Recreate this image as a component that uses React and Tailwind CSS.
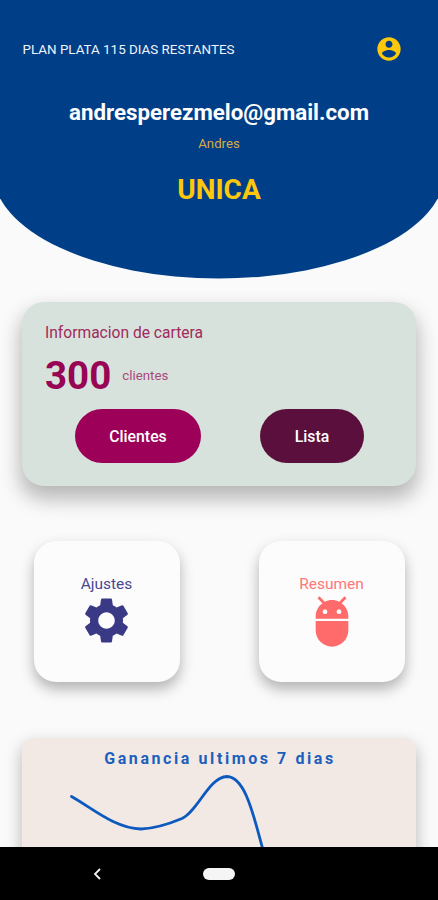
import React from "react";
import { MdSettings, MdAdb } from "react-icons/md";

const Header = () => (
  <header className="relative h-[279px] shrink-0 overflow-hidden">
    <svg
      className="absolute inset-0"
      width="438"
      height="279"
      viewBox="0 0 438 279"
      fill="#003f87"
    >
      <path d="M-7 0H445V172A226 106.500 0 0 1 -7 172Z" />
    </svg>
    <div className="relative">
      <div className="flex items-center justify-between pt-[35px] pl-[22.500px] pr-[35px]">
        <p className="h-[28px] text-[13.400px] leading-[29px] text-[#f0f4fb]">
          PLAN PLATA 115 DIAS RESTANTES
        </p>
        <svg width="28" height="28" viewBox="0 0 24 24" fill="#fdc70c">
          <path d="M12 2C6.480 2 2 6.480 2 12s4.480 10 10 10 10-4.480 10-10S17.520 2 12 2zm0 3c1.660 0 3 1.340 3 3s-1.340 3-3 3-3-1.340-3-3 1.340-3 3-3zm0 14.200c-2.500 0-4.710-1.280-6-3.220.030-1.990 4-3.080 6-3.080 1.990 0 5.970 1.090 6 3.080-1.290 1.940-3.500 3.220-6 3.220z" />
        </svg>
      </div>
      <div className="flex flex-col items-center">
        <h1 className="mt-[35px] text-[22.300px] leading-[28px] font-bold text-white">
          andresperezmelo@gmail.com
        </h1>
        <p className="mt-[8px] text-[13.200px] leading-[20px] text-[#d9ab45]">Andres</p>
        <h2 className="mt-[19px] text-[28px] leading-[34px] font-bold text-[#fdc70c]">UNICA</h2>
      </div>
    </div>
  </header>
);

const Cartera = () => (
  <section className="mx-[22px] mt-[22.500px] h-[184px] shrink-0 rounded-[22px] bg-[#d8e2dc] px-[23px] pt-[20.500px] shadow-[0_11px_20px_2px_rgba(0,0,0,0.27)]">
    <h3 className="text-[15.600px] leading-[22px] text-[#a02a5c]">Informacion de cartera</h3>
    <div className="mt-[8px] flex items-center">
      <span className="text-[38.500px] leading-[48px] font-bold text-[#970554]">300</span>
      <span className="ml-[11px] text-[13.300px] text-[#a84a78]">clientes</span>
    </div>
    <div className="mt-[9px] flex pl-[30px]">
      <button className="h-[54px] w-[126px] rounded-full bg-[#9d0059] pt-[2px] text-[15.800px] font-medium text-white">
        Clientes
      </button>
      <button className="ml-[59px] h-[54px] w-[104px] rounded-full bg-[#5b0f3d] pt-[2px] text-[15.800px] font-medium text-white">
        Lista
      </button>
    </div>
  </section>
);

const Tile = ({ label, className, children }) => (
  <button
    className={`flex h-[141px] w-[146px] flex-col items-center rounded-[22px] bg-[#fcfcfc] pt-[32px] text-[15.500px] leading-[22px] shadow-[0_7px_14px_rgba(0,0,0,0.29)] ${className}`}
  >
    <span className="mr-px">{label}</span>
    {children}
  </button>
);

const Ganancia = () => (
  <section className="mx-[22px] mt-[56px] h-[200px] shrink-0 rounded-[12px] bg-[#f2e9e4] shadow-[0_7px_16px_1px_rgba(0,0,0,0.25)]">
    <h3 className="pt-[10px] pl-[2px] text-center text-[16px] leading-[22px] font-bold tracking-[2.580px] text-[#1c60bd]">
      Ganancia ultimos 7 dias
    </h3>
    <svg width="394" height="84" viewBox="22 770 394 84" fill="none">
      <path
        d="M71.500 796.500C92 808 115 828.500 141 829C156 828.500 170 823.500 182 818.500C198 811 209 777 227 776.500C247 777 255 823 265 857"
        stroke="#0d5abe"
        strokeWidth="2.800"
        strokeLinecap="round"
      />
    </svg>
  </section>
);

const NavBar = () => (
  <nav className="grid h-[53px] shrink-0 grid-cols-[203px_32px_203px] items-center bg-black">
    <svg className="ml-[92px]" width="10" height="14" viewBox="0 0 10 14" fill="none">
      <path d="M8 2L3 7L8 12" stroke="#f2f2f2" strokeWidth="1.800" />
    </svg>
    <span className="h-[12px] w-[32px] rounded-full bg-[#f5f5f5]" />
  </nav>
);

const App = () => (
  <div className="flex h-[900px] w-[438px] flex-col overflow-hidden bg-[#fafafa] font-[Roboto,sans-serif]">
    <main className="flex h-[847px] shrink-0 flex-col overflow-hidden">
      <Header />
      <Cartera />
      <div className="mt-[55.500px] flex shrink-0 justify-between pl-[34px] pr-[33px]">
        <Tile label="Ajustes" className="text-[#4a4792]">
          <MdSettings className="mt-[-2px] mr-px" size={55} color="#3a3985" />
        </Tile>
        <Tile label="Resumen" className="text-[#ff7777]">
          <MdAdb className="mt-[-2px]" size={56} color="#ff6b6b" />
        </Tile>
      </div>
      <Ganancia />
    </main>
    <NavBar />
  </div>
);

export default App;
